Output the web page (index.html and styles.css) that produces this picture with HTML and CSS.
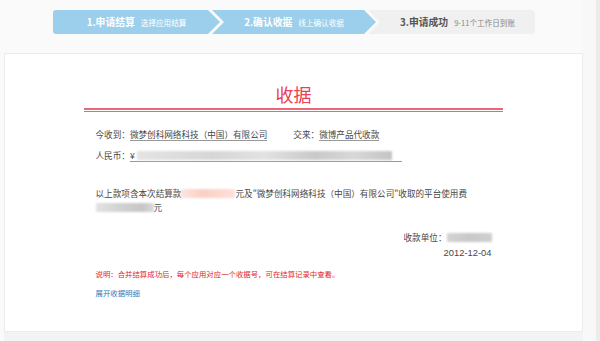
FILE: index.html
```html
<!DOCTYPE html>
<html lang="zh-CN">
<head>
    <meta charset="UTF-8">
    <title>收据</title>
    <link rel="stylesheet" href="styles.css">
</head>
<body>
    <div class="layout">
        <div class="main">
            <div class="steps">
                <div class="step step--first step--done">
                    <b>1.申请结算</b><span>选择应用结算</span>
                </div>
                <div class="step step--done">
                    <b>2.确认收据</b><span>线上确认收据</span>
                </div>
                <div class="step step--last">
                    <b>3.申请成功</b><span>9-11个工作日到账</span>
                </div>
            </div>

            <div class="receipt-card">
                <h1 class="receipt-title">收据</h1>
                <div class="title-rule"></div>

                <div class="receipt-body">
                    <div class="row">
                        今收到：<span class="fill">微梦创科网络科技（中国）有限公司</span>
                        <span class="row__gap">交来：</span><span class="fill">微博产品代收款</span>
                    </div>
                    <div class="row">
                        人民币：<span class="fill fill--amount">¥ <span class="blur blur--amount"></span></span>
                    </div>

                    <p class="statement">
                        以上款项含本次结算款<span class="blur blur--pink"></span>元及"微梦创科网络科技（中国）有限公司"收取的平台使用费<br>
                        <span class="blur blur--fee"></span>元
                    </p>

                    <div class="signature">
                        <div>收款单位：<span class="blur blur--unit"></span></div>
                        <div class="signature__date">2012-12-04</div>
                    </div>

                    <p class="note">说明：合并结算成功后，每个应用对应一个收据号，可在结算记录中查看。</p>
                    <a href="#" class="detail-link">展开收据明细</a>
                </div>
            </div>
            <div class="card-foot"></div>
        </div>
        <div class="side">
            <div class="side__track"></div>
        </div>
    </div>
</body>
</html>
```

FILE: styles.css
```css
* {
    margin: 0;
    padding: 0;
    box-sizing: border-box;
}

body {
    width: 600px;
    height: 341px;
    overflow: hidden;
    background-color: #fafafa;
    font-family: "Noto Sans CJK SC", "Liberation Sans", sans-serif;
    font-size: 8.6px;
    color: #484848;
}

.layout {
    display: flex;
    height: 341px;
}

.main {
    width: 583px;
    display: flex;
    flex-direction: column;
}

/* Steps */
.steps {
    display: flex;
    margin: 10px 0 0 53px;
    height: 24px;
}

.step {
    display: flex;
    align-items: center;
    justify-content: center;
    gap: 6px;
    height: 24px;
    width: 164px;
    margin-left: -8px;
    padding: 0 12px;
    background-color: #9ccfec;
    color: #fff;
    clip-path: polygon(0 0, calc(100% - 12px) 0, 100% 50%, calc(100% - 12px) 100%, 0 100%, 12px 50%);
}

.step b {
    font-size: 9.8px;
    font-weight: 700;
}

.step span {
    font-size: 7.6px;
}

.step--first {
    width: 167px;
    margin-left: 0;
    border-radius: 3px 0 0 3px;
    clip-path: polygon(0 0, calc(100% - 12px) 0, 100% 50%, calc(100% - 12px) 100%, 0 100%);
}

.step--last {
    width: 167px;
    background-color: #f0f0f0;
    color: #888;
    border-radius: 0 4px 4px 0;
    clip-path: polygon(0 0, 100% 0, 100% 100%, 0 100%, 12px 50%);
    padding-right: 0;
}

.step--last b {
    color: #555;
}

/* Receipt */
.receipt-card {
    margin: 19px 0 0 4px;
    width: 579px;
    height: 279px;
    background-color: #fff;
    border: 1px solid #ececec;
}

.receipt-title {
    margin-top: 28px;
    font-size: 18px;
    font-weight: 400;
    line-height: 24px;
    text-align: center;
    color: #ea4054;
}

.title-rule {
    width: 419px;
    height: 4px;
    margin: 2px auto 0;
    border-top: 2px solid #ec6675;
    border-bottom: 1px solid #ec6675;
}

.receipt-body {
    width: 396px;
    margin: 15px auto 0;
}

.row {
    line-height: 14px;
    height: 21px;
    white-space: nowrap;
}

.row__gap {
    margin-left: 24px;
}

.fill {
    display: inline-block;
    line-height: 11px;
    border-bottom: 1px solid #999;
}

.fill--amount {
    width: 272px;
}

.blur {
    display: inline-block;
    height: 9px;
    vertical-align: -1px;
    filter: blur(1.2px);
}

.blur--amount {
    width: 255px;
    background: linear-gradient(90deg, #e4e4e4, #d6d6d6 30%, #e2e2e2 50%, #c9c9c9 70%, #d8d8d8 85%, #c4c4c4);
}

.blur--pink {
    width: 54px;
    background: linear-gradient(90deg, #fde4de, #fbd0c5 40%, #fcd8cf 70%, #fde2db);
}

.blur--fee {
    width: 58px;
    background: linear-gradient(90deg, #e2e2e2, #cfcfcf 50%, #c6c6c6 80%, #dadada);
}

.blur--unit {
    width: 45px;
    background: linear-gradient(90deg, #d4d4d4, #c8c8c8 50%, #d0d0d0);
}

.statement {
    margin-top: 17px;
    line-height: 14px;
    white-space: nowrap;
}

.signature {
    margin-top: 16px;
    text-align: right;
    line-height: 15px;
}

.signature__date {
    font-family: "Liberation Sans", sans-serif;
    font-size: 9.4px;
}

.note {
    margin-top: 8px;
    font-size: 7.4px;
    line-height: 12px;
    color: #e0262b;
}

.detail-link {
    display: inline-block;
    margin-top: 7px;
    font-size: 7.4px;
    line-height: 12px;
    color: #2a7dbd;
    text-decoration: none;
}

.card-foot {
    margin-left: 4px;
    width: 579px;
    flex: 1;
    background-color: #f3f3f3;
}

/* Side strip */
.side {
    flex: 1;
    display: flex;
    justify-content: flex-end;
    background-color: #f8f8f8;
}

.side__track {
    width: 4px;
    background-color: #ececec;
}
```
